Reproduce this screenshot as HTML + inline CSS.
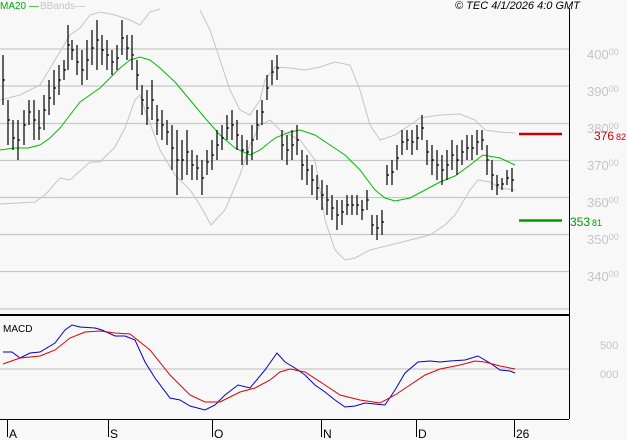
<!DOCTYPE html><html><head><style>
body{margin:0;background:#f8f8f8;width:627px;height:440px;overflow:hidden;font-family:"Liberation Sans",sans-serif}
svg{display:block}
.l{fill:#c4c4c4;font-size:13px}
.s{font-size:9px}
</style></head><body>
<svg width="627" height="440" viewBox="0 0 627 440">
<rect width="627" height="440" fill="#f8f8f8"/>
<g stroke="#c8c8c8" stroke-width="1.2">
<line x1="0" y1="49" x2="569" y2="49"/><line x1="0" y1="86" x2="569" y2="86"/><line x1="0" y1="123.5" x2="569" y2="123.5"/><line x1="0" y1="160.5" x2="569" y2="160.5"/><line x1="0" y1="197.5" x2="569" y2="197.5"/><line x1="0" y1="234.5" x2="569" y2="234.5"/><line x1="0" y1="271.5" x2="569" y2="271.5"/><line x1="0" y1="309" x2="569" y2="309"/><line x1="0" y1="369" x2="569" y2="369"/>
</g>
<line x1="0" y1="315" x2="569" y2="315" stroke="#000" stroke-width="2"/>
<line x1="569.5" y1="8" x2="569.5" y2="419" stroke="#000"/>
<line x1="0" y1="419.5" x2="569" y2="419.5" stroke="#000"/>
<g stroke="#000"><line x1="7.5" y1="420" x2="7.5" y2="437"/><line x1="108.5" y1="420" x2="108.5" y2="437"/><line x1="212.5" y1="420" x2="212.5" y2="437"/><line x1="321.5" y1="420" x2="321.5" y2="437"/><line x1="416.5" y1="420" x2="416.5" y2="437"/><line x1="514.5" y1="420" x2="514.5" y2="437"/></g>
<g font-size="12" fill="#000"><text x="9" y="438">A</text><text x="110" y="438">S</text><text x="214" y="438">O</text><text x="323" y="438">N</text><text x="418" y="438">D</text><text x="516" y="438">26</text></g>
<g class="l"><text x="587" y="59">400<tspan class="s" dy="-4">00</tspan></text><text x="587" y="96">390<tspan class="s" dy="-4">00</tspan></text><text x="587" y="133">380<tspan class="s" dy="-4">00</tspan></text><text x="587" y="170">370<tspan class="s" dy="-4">00</tspan></text><text x="587" y="207">360<tspan class="s" dy="-4">00</tspan></text><text x="587" y="244">350<tspan class="s" dy="-4">00</tspan></text><text x="587" y="281">340<tspan class="s" dy="-4">00</tspan></text><text x="600" y="349" font-size="11">500</text><text x="600" y="378" font-size="11">000</text></g>
<line x1="519" y1="134" x2="562" y2="134" stroke="#cc0000" stroke-width="2.5"/>
<text x="594" y="140" fill="#cc0000" font-size="12">376<tspan font-size="9" dx="2">82</tspan></text>
<line x1="519" y1="220.5" x2="562" y2="220.5" stroke="#009900" stroke-width="2.5"/>
<text x="570" y="226" fill="#009900" font-size="12">353<tspan font-size="9" dx="2">81</tspan></text>
<text x="0" y="9" fill="#00aa00" font-size="10">MA20 <tspan>—</tspan></text>
<text x="40" y="9" fill="#c4c4c4" font-size="10">BBands—</text>
<text x="455" y="9" fill="#000" font-size="11" font-style="italic">© TEC 4/1/2026 4:0 GMT</text>
<text x="3" y="332" fill="#000" font-size="10">MACD</text>
<g fill="none" stroke="#c4c4c4" stroke-width="1">
<polyline points="0,100 20,95 40,85 55,60 70,35 80,28 90,15 100,12 115,15 130,20 140,25 150,12 160,9"/>
<polyline points="200,10 210,30 220,60 230,90 240,110 250,115 260,100 265,80 275,67 290,68 305,70 320,67 335,62 350,65 360,90 370,125 380,140 395,135 410,125 420,118 440,115 460,114 475,120 485,130 500,132 515,133"/>
<polyline points="0,204 35,202 45,195 60,178 70,180 90,162 100,162 115,147 125,128 135,100 140,95 145,110 160,150 175,175 190,190 200,205 211,225 225,210 240,175 250,145 260,125 270,120 280,130 300,140 315,160 325,220 335,250 345,260 355,258 370,250 390,245 410,240 430,235 445,225 455,215 470,190 478,180 490,182 500,188 515,190"/>
</g>
<polyline fill="none" stroke="#00bb00" stroke-width="1" points="0,150 15,148 28,148 40,145 50,138 60,128 70,115 80,102 90,95 100,88 110,78 120,68 130,60 140,57 150,60 160,68 175,82 190,100 205,118 220,135 235,148 250,155 260,150 275,138 290,132 300,130 315,135 330,145 345,155 360,170 375,190 385,198 395,201 410,198 425,190 440,182 455,176 470,165 483,155 500,158 515,165"/>
<path id="bars" fill="none" stroke="#000" stroke-width="1.2" d="M3,55V105M8,100V145M13,120V150M18,120V160M24,110V145M29,100V125M34,100V140M39,110V140M44,95V130M49,80V115M54,70V105M59,65V95M64,60V80M68,25V70M72,40V60M77,45V75M82,50V85M87,40V80M92,30V65M97,20V70M102,35V65M107,40V70M112,50V75M117,45V70M122,20V55M127,35V60M132,35V70M137,60V90M142,85V115M147,90V125M152,80V120M157,105V135M162,110V140M167,120V145M172,125V170M177,130V195M182,140V180M187,130V175M192,150V180M197,155V180M202,160V195M207,150V175M212,140V170M217,130V160M222,125V150M227,115V140M232,110V140M237,120V150M242,135V165M247,140V165M252,125V160M257,110V140M262,100V125M267,75V100M272,60V85M277,55V80M282,130V160M287,135V165M292,130V160M297,125V155M302,150V180M307,155V185M312,165V195M317,175V200M322,180V210M327,185V215M332,195V220M337,200V230M342,200V225M347,195V215M352,195V215M357,195V215M362,200V220M367,190V210M372,215V235M377,215V240M382,210V235M387,165V185M392,160V185M397,145V170M402,130V155M407,130V150M412,130V155M417,125V150M422,115V140M427,140V165M432,145V175M437,150V180M442,155V185M447,150V180M452,140V170M457,145V175M462,140V165M467,135V160M472,135V160M477,130V155M482,130V150M487,145V175M492,160V190M497,175V195M502,178V190M507,170V185M512,168V192"/>
<path fill="none" stroke="#000" stroke-width="1.2" d="M3,80h2M8,120h2M13,138h2M18,140h2M24,125h2M29,112h2M34,120h2M39,128h2M44,110h2M49,98h2M54,88h2M59,80h2M64,70h2M68,45h2M72,50h2M77,62h2M82,70h2M87,60h2M92,48h2M97,40h2M102,50h2M107,55h2M112,62h2M117,58h2M122,38h2M127,48h2M132,55h2M137,75h2M142,100h2M147,108h2M152,100h2M157,120h2M162,125h2M167,132h2M172,148h2M177,160h2M182,160h2M187,152h2M192,165h2M197,168h2M202,178h2M207,162h2M212,155h2M217,145h2M222,138h2M227,128h2M232,125h2M237,135h2M242,150h2M247,152h2M252,140h2M257,125h2M262,112h2M267,88h2M272,72h2M277,68h2M282,145h2M287,150h2M292,145h2M297,140h2M302,165h2M307,170h2M312,180h2M317,188h2M322,195h2M327,200h2M332,208h2M337,215h2M342,212h2M347,205h2M352,205h2M357,205h2M362,210h2M367,200h2M372,225h2M377,228h2M382,222h2M387,175h2M392,172h2M397,158h2M402,142h2M407,140h2M412,142h2M417,138h2M422,128h2M427,152h2M432,160h2M437,165h2M442,170h2M447,165h2M452,155h2M457,160h2M462,152h2M467,148h2M472,148h2M477,142h2M482,140h2M487,160h2M492,175h2M497,185h2M502,184h2M507,178h2M512,180h2"/>
<polyline fill="none" stroke="#0000cc" stroke-width="1" points="3,352 12,352 20,358 30,353 40,352 55,343 65,330 72,325 80,327 95,328 102,330 115,336 125,336 135,340 145,362 155,378 170,398 180,400 190,406 205,410 215,405 225,395 238,385 250,388 265,370 277,353 285,362 295,368 305,375 315,385 325,392 335,400 345,407 355,406 365,403 375,404 385,405 395,390 405,373 418,362 430,361 440,362 450,361 465,360 478,356 490,363 500,370 510,371 515,373"/>
<polyline fill="none" stroke="#dd0000" stroke-width="1" points="3,364 20,358 40,356 55,350 70,338 85,332 100,331 115,333 130,334 150,350 170,375 190,395 205,402 220,402 240,392 255,388 270,380 280,372 290,369 305,372 325,385 340,395 360,400 380,403 395,395 410,385 425,375 440,369 460,365 475,361 485,362 500,366 515,369"/>
</svg>
</body></html>
